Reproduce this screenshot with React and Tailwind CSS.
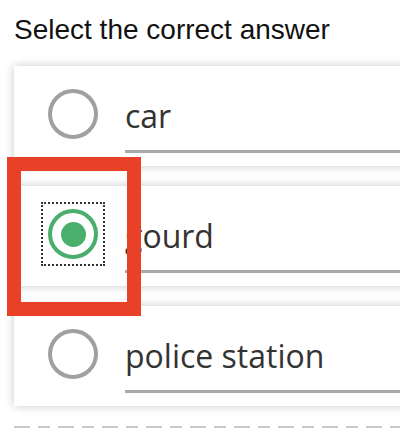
import React, { useState } from "react";

const options = ["car", "gourd", "police station"];

const Radio = ({ checked }) => (
  <div
    className={`ml-[27px] mt-4 w-16 h-16 shrink-0 flex items-center justify-center border-2 border-dotted ${
      checked ? "border-[#333]" : "border-transparent"
    }`}
  >
    {checked ? (
      <div className="w-[50px] h-[50px] rounded-full border-[4.5px] border-[#4aae6c] flex items-center justify-center">
        <div className="w-[25px] h-[25px] rounded-full bg-[#4aae6c]" />
      </div>
    ) : (
      <div className="w-[50px] h-[50px] rounded-full border-[4.5px] border-[#a0a0a0]" />
    )}
  </div>
);

const App = () => {
  const [selected, setSelected] = useState(1);

  return (
    <div className="relative w-[400px] h-[428px] overflow-hidden bg-white">
      <h1 className="pl-[14px] pt-4 text-[28px] leading-[28px] text-[#111] font-['Liberation_Sans',Arial,sans-serif]">
        Select the correct answer
      </h1>

      {/* answer cards */}
      <div className="mt-[22px] ml-[14px] w-[420px] flex flex-col gap-5">
        {options.map((opt, i) => (
          <div
            key={opt}
            onClick={() => setSelected(i)}
            className="h-[100px] bg-white flex items-start shadow-[0_0_9px_rgba(0,0,0,0.22)]"
          >
            <Radio checked={selected === i} />
            <div className="ml-[20px] mt-[28px] flex-1 pb-[12px] border-b-[3px] border-[#a8a8a8] text-[32px] leading-[44px] text-[#333] font-['Open_Sans','Noto_Sans',sans-serif]">
              {opt}
            </div>
          </div>
        ))}
      </div>

      {/* dashed divider */}
      <div className="mt-5 ml-[14px] h-[3px] bg-[repeating-linear-gradient(90deg,#c8c8c8_0_16px,transparent_16px_24px,#c8c8c8_24px_36px,transparent_36px_44px)]" />

      {/* highlight box */}
      <div className="absolute left-[7px] top-[157px] w-[134px] h-[159px] border-[14px] border-[#e94128] pointer-events-none" />
    </div>
  );
};

export default App;
